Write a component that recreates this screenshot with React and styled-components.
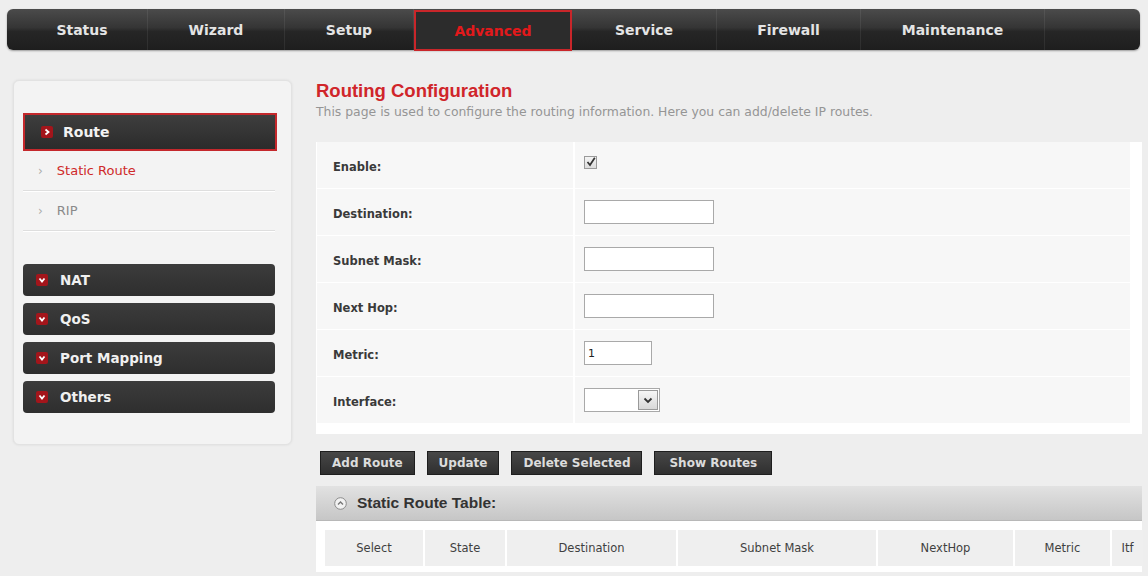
import React from "react";
import styled, { createGlobalStyle } from "styled-components";

const Global = createGlobalStyle`
  html, body { margin: 0; padding: 0; }
  body {
    background: #eeeeee;
    font-family: "DejaVu Sans", "Liberation Sans", sans-serif;
    width: 1148px;
    height: 576px;
    overflow: hidden;
  }
`;

const Page = styled.div`
  display: flex;
  flex-direction: column;
  padding: 9px 8px 0 7px;
`;

const TopNav = styled.nav`
  display: flex;
  height: 41px;
  border-radius: 6px;
  padding-left: 10px;
  background: linear-gradient(#4b4b4b 0%, #353535 45%, #262626 55%, #1e1e1e 100%);
  box-shadow: 0 1px 2px rgba(0, 0, 0, 0.35);
`;

const Tab = styled.div`
  width: ${(p) => p.$w}px;
  box-sizing: border-box;
  display: flex;
  align-items: center;
  justify-content: center;
  font: bold 14px "DejaVu Sans", sans-serif;
  color: ${(p) => (p.$active ? "#e3191b" : "#e4e4e4")};
  border-right: 1px solid rgba(255, 255, 255, 0.07);
  ${(p) =>
    p.$active &&
    `border: 2px solid #c9262a; margin-top: 1px; height: 41px; background: #2c2c2c;`}
`;

const Body = styled.div`
  display: flex;
  align-items: flex-start;
`;

const Sidebar = styled.aside`
  width: 279px;
  flex: none;
  box-sizing: border-box;
  margin: 30px 0 0 6px;
  padding: 32px 16px 31px 9px;
  background: #f3f3f3;
  border: 1px solid #e2e2e2;
  border-radius: 6px;
  box-shadow: 0 0 3px rgba(0, 0, 0, 0.08);
  display: flex;
  flex-direction: column;
`;

const ActiveHead = styled.div`
  height: 38px;
  box-sizing: border-box;
  border: 2px solid #c4282c;
  background: linear-gradient(#3e3e3e, #2b2b2b);
  display: flex;
  align-items: center;
  gap: 10px;
  padding-left: 16px;
  font: bold 14px "DejaVu Sans", sans-serif;
  color: #f2f2f2;
  margin-right: -2px;
`;

const IconBox = styled.span`
  width: 12px;
  height: 12px;
  background: #a3151b;
  border-radius: 2px;
  display: inline-flex;
  align-items: center;
  justify-content: center;
  flex: none;
`;

const SubItem = styled.div`
  height: 39px;
  display: flex;
  align-items: center;
  gap: 14px;
  padding-left: 15px;
  border-bottom: 1px solid #dedede;
  box-shadow: 0 1px 0 #fff;
  font: 13px "DejaVu Sans", sans-serif;
  color: ${(p) => (p.$active ? "#cf2a2a" : "#8a8a8a")};
`;

const Chev = styled.span`
  color: #aaa;
  font-size: 12px;
`;

const Groups = styled.div`
  margin-top: 33px;
  display: flex;
  flex-direction: column;
  gap: 7px;
`;

const GroupBar = styled.div`
  height: 32px;
  border-radius: 4px;
  background: linear-gradient(#3c3c3c, #2e2e2e);
  display: flex;
  align-items: center;
  gap: 12px;
  padding-left: 13px;
  font: bold 13.5px "DejaVu Sans", sans-serif;
  color: #f0f0f0;
`;

const Main = styled.main`
  margin: 30px 0 0 24px;
  width: 826px;
  flex: none;
  display: flex;
  flex-direction: column;
`;

const Title = styled.h1`
  margin: 0;
  font: bold 18.5px "Liberation Sans", Arial, sans-serif;
  color: #d0252a;
  line-height: 22px;
`;

const Desc = styled.p`
  margin: 2px 0 0;
  font: 12.4px "DejaVu Sans", sans-serif;
  color: #959595;
  line-height: 15px;
`;

const FormBox = styled.div`
  margin-top: 23px;
  background: #fff;
  padding: 0 12px 11px 1px;
  display: flex;
  flex-direction: column;
  gap: 1px;
`;

const FormRow = styled.div`
  height: 46px;
  display: grid;
  grid-template-columns: 256px 1fr;
  column-gap: 2px;
`;

const LabelCell = styled.div`
  background: #f7f7f7;
  display: flex;
  align-items: center;
  padding: 3px 0 0 16px;
  font: bold 11.5px "DejaVu Sans", sans-serif;
  color: #3a3a3a;
`;

const ValueCell = styled.div`
  background: #f7f7f7;
  display: flex;
  align-items: center;
  padding-left: 9px;
`;

const TextInput = styled.div`
  width: ${(p) => p.$w}px;
  height: 24px;
  box-sizing: border-box;
  border: 1px solid #a9a9a9;
  background: #fff;
  font: 11px "DejaVu Sans", sans-serif;
  color: #222;
  display: flex;
  align-items: center;
  padding-left: 3px;
`;

const Check = styled.span`
  width: 13px;
  height: 13px;
  box-sizing: border-box;
  border: 1px solid #9a9a9a;
  background: linear-gradient(#f4f4f4, #dcdcdc);
  display: inline-flex;
  align-items: center;
  justify-content: center;
  margin-top: -6px;
`;

const SelectBox = styled.div`
  width: 76px;
  height: 24px;
  box-sizing: border-box;
  border: 1px solid #a9a9a9;
  background: #fff;
  display: flex;
  justify-content: flex-end;
  padding: 1px;
`;

const SelectBtn = styled.span`
  width: 20px;
  box-sizing: border-box;
  border: 1px solid #999;
  background: linear-gradient(#f6f6f6, #d8d8d8);
  display: flex;
  align-items: center;
  justify-content: center;
`;

const ButtonBar = styled.div`
  margin-top: 17px;
  padding-left: 4px;
  display: flex;
  gap: 12px;
`;

const Button = styled.button`
  height: 24px;
  padding: 0 ${(p) => p.$px || 11}px;
  border: 1px solid #1e1e1e;
  background: linear-gradient(#474747, #2f2f2f);
  color: #dcdcdc;
  font: bold 12px "DejaVu Sans", sans-serif;
  cursor: pointer;
`;

const TableHead = styled.div`
  margin-top: 11px;
  height: 34px;
  background: linear-gradient(#e2e2e2, #c6c6c6);
  border-bottom: 1px solid #b8b8b8;
  display: flex;
  align-items: center;
  gap: 10px;
  padding-left: 18px;
  font: bold 15.5px "Liberation Sans", Arial, sans-serif;
  color: #333;
`;

const TableBody = styled.div`
  background: #fff;
  padding: 9px 11px 6px 9px;
`;

const HeaderRow = styled.div`
  display: grid;
  grid-template-columns: 98px 80px 169px 198px 135px 95px 31px;
  column-gap: 2px;
  height: 36px;
`;

const HeadCell = styled.div`
  background: #efefef;
  display: flex;
  align-items: center;
  justify-content: center;
  font: 11.5px "DejaVu Sans", sans-serif;
  color: #3f3f3f;
`;

const tabs = [
  { t: "Status", w: 131 },
  { t: "Wizard", w: 137 },
  { t: "Setup", w: 129 },
  { t: "Advanced", w: 158, active: true },
  { t: "Service", w: 145 },
  { t: "Firewall", w: 144 },
  { t: "Maintenance", w: 184 },
];

const ChevRight = () => (
  <svg width="8" height="8" viewBox="0 0 8 8">
    <path d="M2.5 1.5 L5.5 4 L2.5 6.5" fill="none" stroke="#fff" strokeWidth="1.8" />
  </svg>
);
const ChevDown = () => (
  <svg width="8" height="8" viewBox="0 0 8 8">
    <path d="M1.5 2.5 L4 5.5 L6.5 2.5" fill="none" stroke="#fff" strokeWidth="1.8" />
  </svg>
);

const formRows = [
  { l: "Enable:", kind: "check" },
  { l: "Destination:", kind: "input", w: 130 },
  { l: "Subnet Mask:", kind: "input", w: 130 },
  { l: "Next Hop:", kind: "input", w: 130 },
  { l: "Metric:", kind: "input", w: 68, v: "1" },
  { l: "Interface:", kind: "select" },
];

const cols = ["Select", "State", "Destination", "Subnet Mask", "NextHop", "Metric", "Itf"];

export default function App() {
  return (
    <>
      <Global />
      <Page>
        <TopNav>
          {tabs.map((t) => (
            <Tab key={t.t} $w={t.w} $active={t.active}>
              {t.t}
            </Tab>
          ))}
        </TopNav>
        <Body>
          <Sidebar>
            <ActiveHead>
              <IconBox>
                <ChevRight />
              </IconBox>
              Route
            </ActiveHead>
            <SubItem $active>
              <Chev>›</Chev>Static Route
            </SubItem>
            <SubItem>
              <Chev>›</Chev>RIP
            </SubItem>
            <Groups>
              {["NAT", "QoS", "Port Mapping", "Others"].map((g) => (
                <GroupBar key={g}>
                  <IconBox>
                    <ChevDown />
                  </IconBox>
                  {g}
                </GroupBar>
              ))}
            </Groups>
          </Sidebar>
          <Main>
            <Title>Routing Configuration</Title>
            <Desc>This page is used to configure the routing information. Here you can add/delete IP routes.</Desc>
            <FormBox>
              {formRows.map((r) => (
                <FormRow key={r.l}>
                  <LabelCell>{r.l}</LabelCell>
                  <ValueCell>
                    {r.kind === "check" && (
                      <Check>
                        <svg width="10" height="10" viewBox="0 0 10 10">
                          <path d="M1.5 5 L4 8 L8.8 0.8" fill="none" stroke="#333" strokeWidth="1.7" />
                        </svg>
                      </Check>
                    )}
                    {r.kind === "input" && <TextInput $w={r.w}>{r.v}</TextInput>}
                    {r.kind === "select" && (
                      <SelectBox>
                        <SelectBtn>
                          <svg width="10" height="7" viewBox="0 0 10 7">
                            <path d="M1.5 1.5 L5 5 L8.5 1.5" fill="none" stroke="#333" strokeWidth="1.8" />
                          </svg>
                        </SelectBtn>
                      </SelectBox>
                    )}
                  </ValueCell>
                </FormRow>
              ))}
            </FormBox>
            <ButtonBar>
              <Button>Add Route</Button>
              <Button>Update</Button>
              <Button>Delete Selected</Button>
              <Button $px={14}>Show Routes</Button>
            </ButtonBar>
            <TableHead>
              <svg width="13" height="13" viewBox="0 0 13 13">
                <circle cx="6.5" cy="6.5" r="5.8" fill="#f2f2f2" stroke="#8a8a8a" strokeWidth="1" />
                <path d="M4 7.5 L6.5 5 L9 7.5" fill="none" stroke="#777" strokeWidth="1.4" />
              </svg>
              Static Route Table:
            </TableHead>
            <TableBody>
              <HeaderRow>
                {cols.map((c) => (
                  <HeadCell key={c}>{c}</HeadCell>
                ))}
              </HeaderRow>
            </TableBody>
          </Main>
        </Body>
      </Page>
    </>
  );
}
